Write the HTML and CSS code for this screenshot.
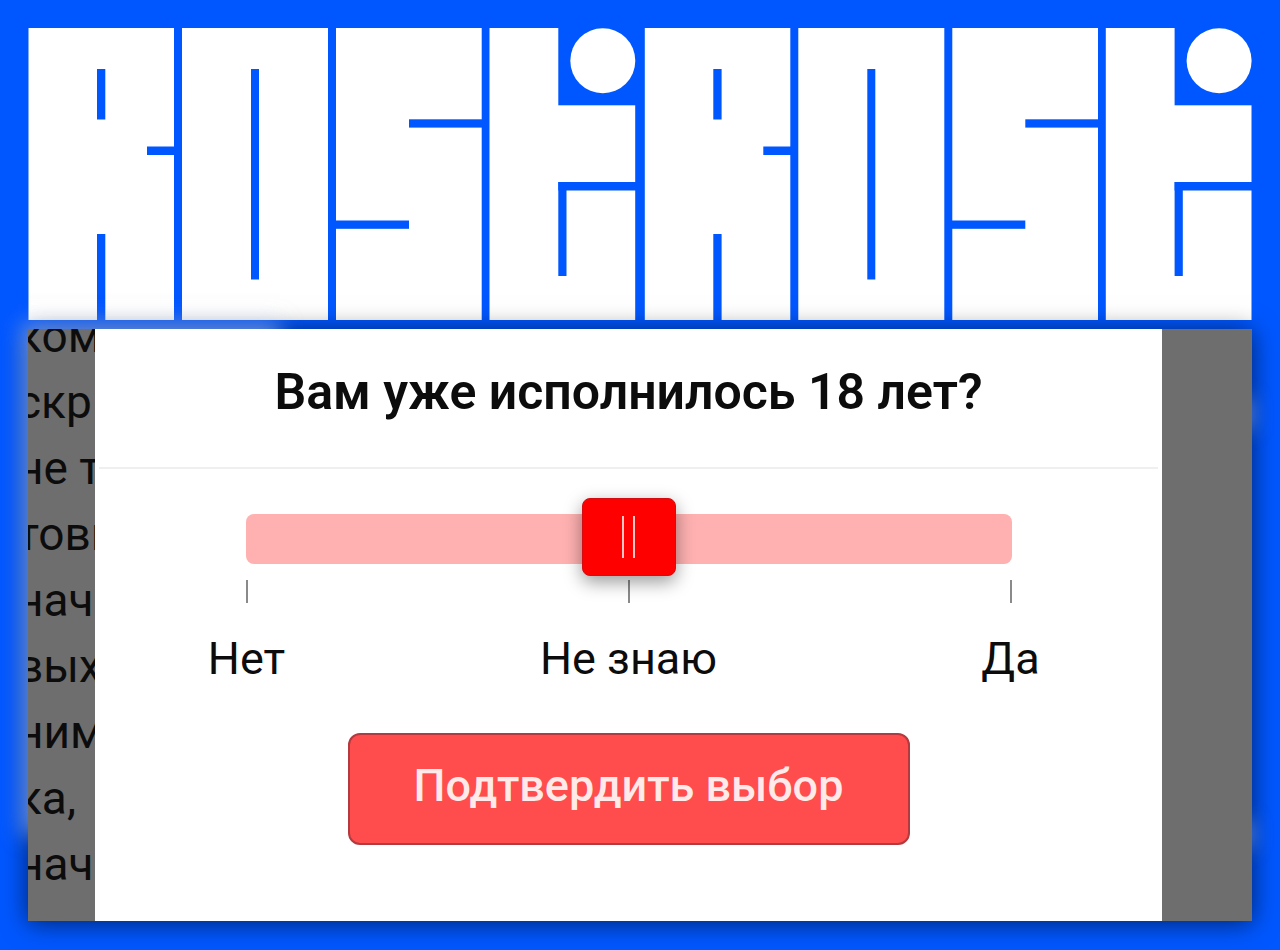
FILE: index.html
```html
<!DOCTYPE html>
<html lang="ru">
<head>
<meta charset="utf-8">
<meta name="viewport" content="width=device-width, initial-scale=1">
<title>Вам уже исполнилось 18 лет?</title>
<link rel="stylesheet" href="styles.css">
</head>
<body>
<main class="page">
  <svg class="logo" viewBox="0 0 1224 292" role="img" aria-label="Rosti Rosti">
    <defs>
      <g id="mark">
        <g fill="#fff">
          <rect x="0.5" width="145.500" height="292"/>
          <rect x="154" width="146" height="292"/>
          <rect x="308" width="145.700" height="292"/>
          <rect x="461.500" width="145.700" height="292"/>
        </g>
        <g fill="#0057ff">
          <rect x="69" y="41" width="8.300" height="50.500"/>
          <rect x="119" y="118.500" width="28" height="8.500"/>
          <rect x="69" y="206" width="8.300" height="87"/>
          <rect x="223" y="41" width="8" height="210.500"/>
          <rect x="381" y="91.300" width="74" height="8.300"/>
          <rect x="307" y="192.500" width="74" height="8.300"/>
          <rect x="530.300" y="-1" width="78" height="78.300"/>
          <rect x="530.300" y="154" width="78" height="8.500"/>
          <rect x="530.300" y="154" width="8.200" height="94"/>
        </g>
        <circle cx="574.800" cy="32.700" r="32.500" fill="#fff"/>
      </g>
    </defs>
    <use href="#mark"/>
    <use href="#mark" x="616.300"/>
  </svg>

  <section class="screen">
    <span class="glow glow-left"></span>
    <span class="glow glow-upper"></span>
    <span class="glow glow-lower"></span>
    <aside class="backdrop">
      <p>ком</p><p>скр</p><p>не то</p><p>товы</p><p>нач</p><p>вых</p><p>ним</p><p>ка,</p><p>нач</p>
    </aside>
    <form class="dialog">
      <h1 class="title"><label for="age">Вам уже исполнилось 18 лет?</label></h1>
      <div class="choice">
        <input class="slider" id="age" type="range" min="0" max="2" value="1">
        <div class="marks">
          <span class="stop">Нет</span>
          <span class="stop">Не знаю</span>
          <span class="stop">Да</span>
        </div>
      </div>
      <button class="confirm" type="button">Подтвердить выбор</button>
    </form>
    <div class="shade"></div>
  </section>
</main>
</body>
</html>
```

FILE: styles.css
```css
* { box-sizing: border-box; }

body {
  margin: 0;
  background: #0057ff;
  font-family: Roboto, "Liberation Sans", sans-serif;
  color: #0c0c0c;
}

.page {
  display: flex;
  flex-direction: column;
  gap: 9px;
  padding: 28px;
}

.logo { display: block; width: 100%; }

.screen {
  position: relative;
  isolation: isolate;
  display: grid;
  grid-template-columns: 67px 1fr 90px;
  box-shadow: 0 2px 24px rgba(0, 0, 0, .6);
}

/* light spilling out from behind the panel */
.glow {
  position: absolute;
  z-index: -1;
  box-shadow: 0 0 20px 6px rgba(190, 212, 255, .55);
}
.glow-left { left: 0; top: 0; width: 246px; bottom: 92px; }
.glow-upper { right: 7px; top: 76px; width: 10px; height: 18px; }
.glow-lower { right: 7px; bottom: 80px; width: 10px; height: 14px; }

.backdrop {
  overflow: hidden;
  height: 592px;
  background: #6e6e6e;
  font-size: 46px;
  line-height: 66px;
  white-space: nowrap;
}
.backdrop p { margin: 0 0 0 -11px; }
.backdrop p:first-child { margin-top: -26px; }

.shade { background: #6e6e6e; }

.dialog {
  display: flex;
  flex-direction: column;
  align-items: center;
  background: #fff;
}

.title {
  align-self: stretch;
  margin: 0 4px;
  padding: 31px 0 43px;
  border-bottom: 2px solid #efefef;
  font-size: 50px;
  line-height: 64px;
  font-weight: 600;
  text-align: center;
}

.choice {
  width: 100%;
  max-width: 766px;
  padding-top: 45px;
}

.slider {
  display: block;
  appearance: none;
  width: 100%;
  height: 50px;
  margin: 0;
  border-radius: 8px;
  background: #ffb1b1;
}
.slider::-webkit-slider-runnable-track { height: 50px; }
.slider::-webkit-slider-thumb {
  appearance: none;
  position: relative;
  width: 94px;
  height: 78px;
  margin-top: -16px;
  border: 1px solid #d40d10;
  border-radius: 8px;
  background:
    linear-gradient(#ffc4c4, #ffc4c4) 39px 17px / 2px 42px no-repeat,
    linear-gradient(#ffc4c4, #ffc4c4) 50px 17px / 2px 42px no-repeat,
    #fe0000;
  box-shadow: 0 6px 18px rgba(0, 0, 0, .4);
}

.marks {
  display: flex;
  justify-content: space-between;
  padding-top: 16px;
  font-size: 45px;
  line-height: 56px;
}
.stop {
  display: flex;
  flex-direction: column;
  align-items: center;
  gap: 28px;
  width: 2px;
  white-space: nowrap;
}
.stop::before {
  content: "";
  width: 2px;
  height: 23px;
  background: #8a8a8a;
}

.confirm {
  width: 562px;
  max-width: 100%;
  margin-top: 46px;
  padding: 24px 0 30px;
  border: 2px solid #b33a3e;
  border-radius: 12px;
  background: #ff4c4c;
  color: #ffe9e9;
  font-family: inherit;
  font-size: 45px;
  line-height: 54px;
  font-weight: 500;
}
```
